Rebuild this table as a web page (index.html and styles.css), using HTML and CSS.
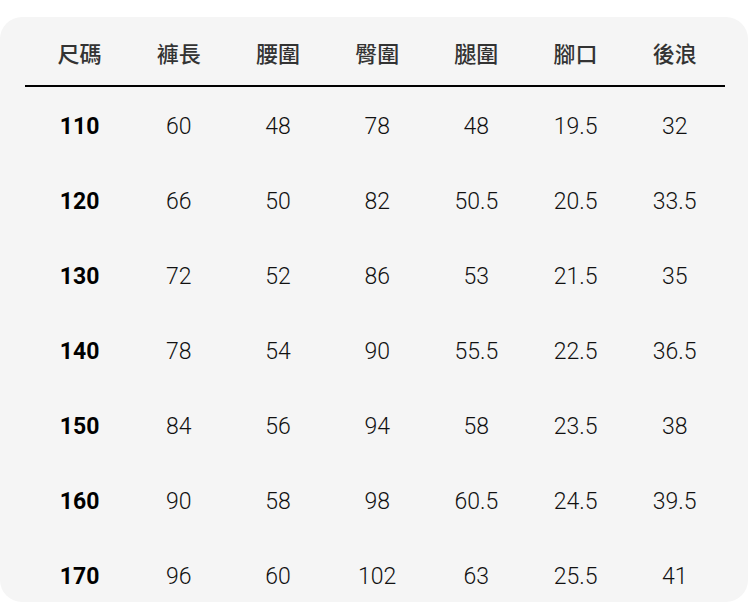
FILE: index.html
```html
<!DOCTYPE html>
<html lang="zh-Hant">
<head>
<meta charset="utf-8">
<link rel="stylesheet" href="styles.css">
</head>
<body>
<div class="card">
  <div class="table">
    <div class="row head">
      <div>尺碼</div><div>褲長</div><div>腰圍</div><div>臀圍</div><div>腿圍</div><div>腳口</div><div>後浪</div>
    </div>
    <div class="rule"></div>
    <div class="body">
      <div class="row"><div class="size">110</div><div>60</div><div>48</div><div>78</div><div>48</div><div>19.5</div><div>32</div></div>
      <div class="row"><div class="size">120</div><div>66</div><div>50</div><div>82</div><div>50.5</div><div>20.5</div><div>33.5</div></div>
      <div class="row"><div class="size">130</div><div>72</div><div>52</div><div>86</div><div>53</div><div>21.5</div><div>35</div></div>
      <div class="row"><div class="size">140</div><div>78</div><div>54</div><div>90</div><div>55.5</div><div>22.5</div><div>36.5</div></div>
      <div class="row"><div class="size">150</div><div>84</div><div>56</div><div>94</div><div>58</div><div>23.5</div><div>38</div></div>
      <div class="row"><div class="size">160</div><div>90</div><div>58</div><div>98</div><div>60.5</div><div>24.5</div><div>39.5</div></div>
      <div class="row"><div class="size">170</div><div>96</div><div>60</div><div>102</div><div>63</div><div>25.5</div><div>41</div></div>
    </div>
  </div>
</div>
</body>
</html>
```
FILE: styles.css
```css
html, body {
  margin: 0;
  padding: 0;
  background: #ffffff;
}
body {
  padding-top: 17px;
}
.card {
  width: 748px;
  height: 585px;
  background: #f5f5f5;
  border-radius: 22px;
  overflow: hidden;
  box-sizing: border-box;
  padding: 0 25px 0 25px;
}
.table {
  width: 700px;
}
.row {
  display: grid;
  grid-template-columns: repeat(7, 99.2px);
  margin: 0 1px 0 5px;
  text-align: center;
}
.head {
  padding-top: 20px;
  padding-bottom: 18px;
  line-height: 30px;
  font-family: "Noto Sans CJK TC", "Noto Sans", sans-serif;
  font-size: 22px;
  font-weight: 500;
  color: #333333;
}
.rule {
  height: 2px;
  background: #000000;
}
.body {
  padding-top: 2px;
}
.body .row {
  height: 75px;
  line-height: 75px;
  font-family: Roboto, "Noto Sans", sans-serif;
  font-weight: 300;
  font-size: 23px;
  color: #111111;
}
.body .row .size {
  font-weight: 700;
  color: #000000;
}
```
